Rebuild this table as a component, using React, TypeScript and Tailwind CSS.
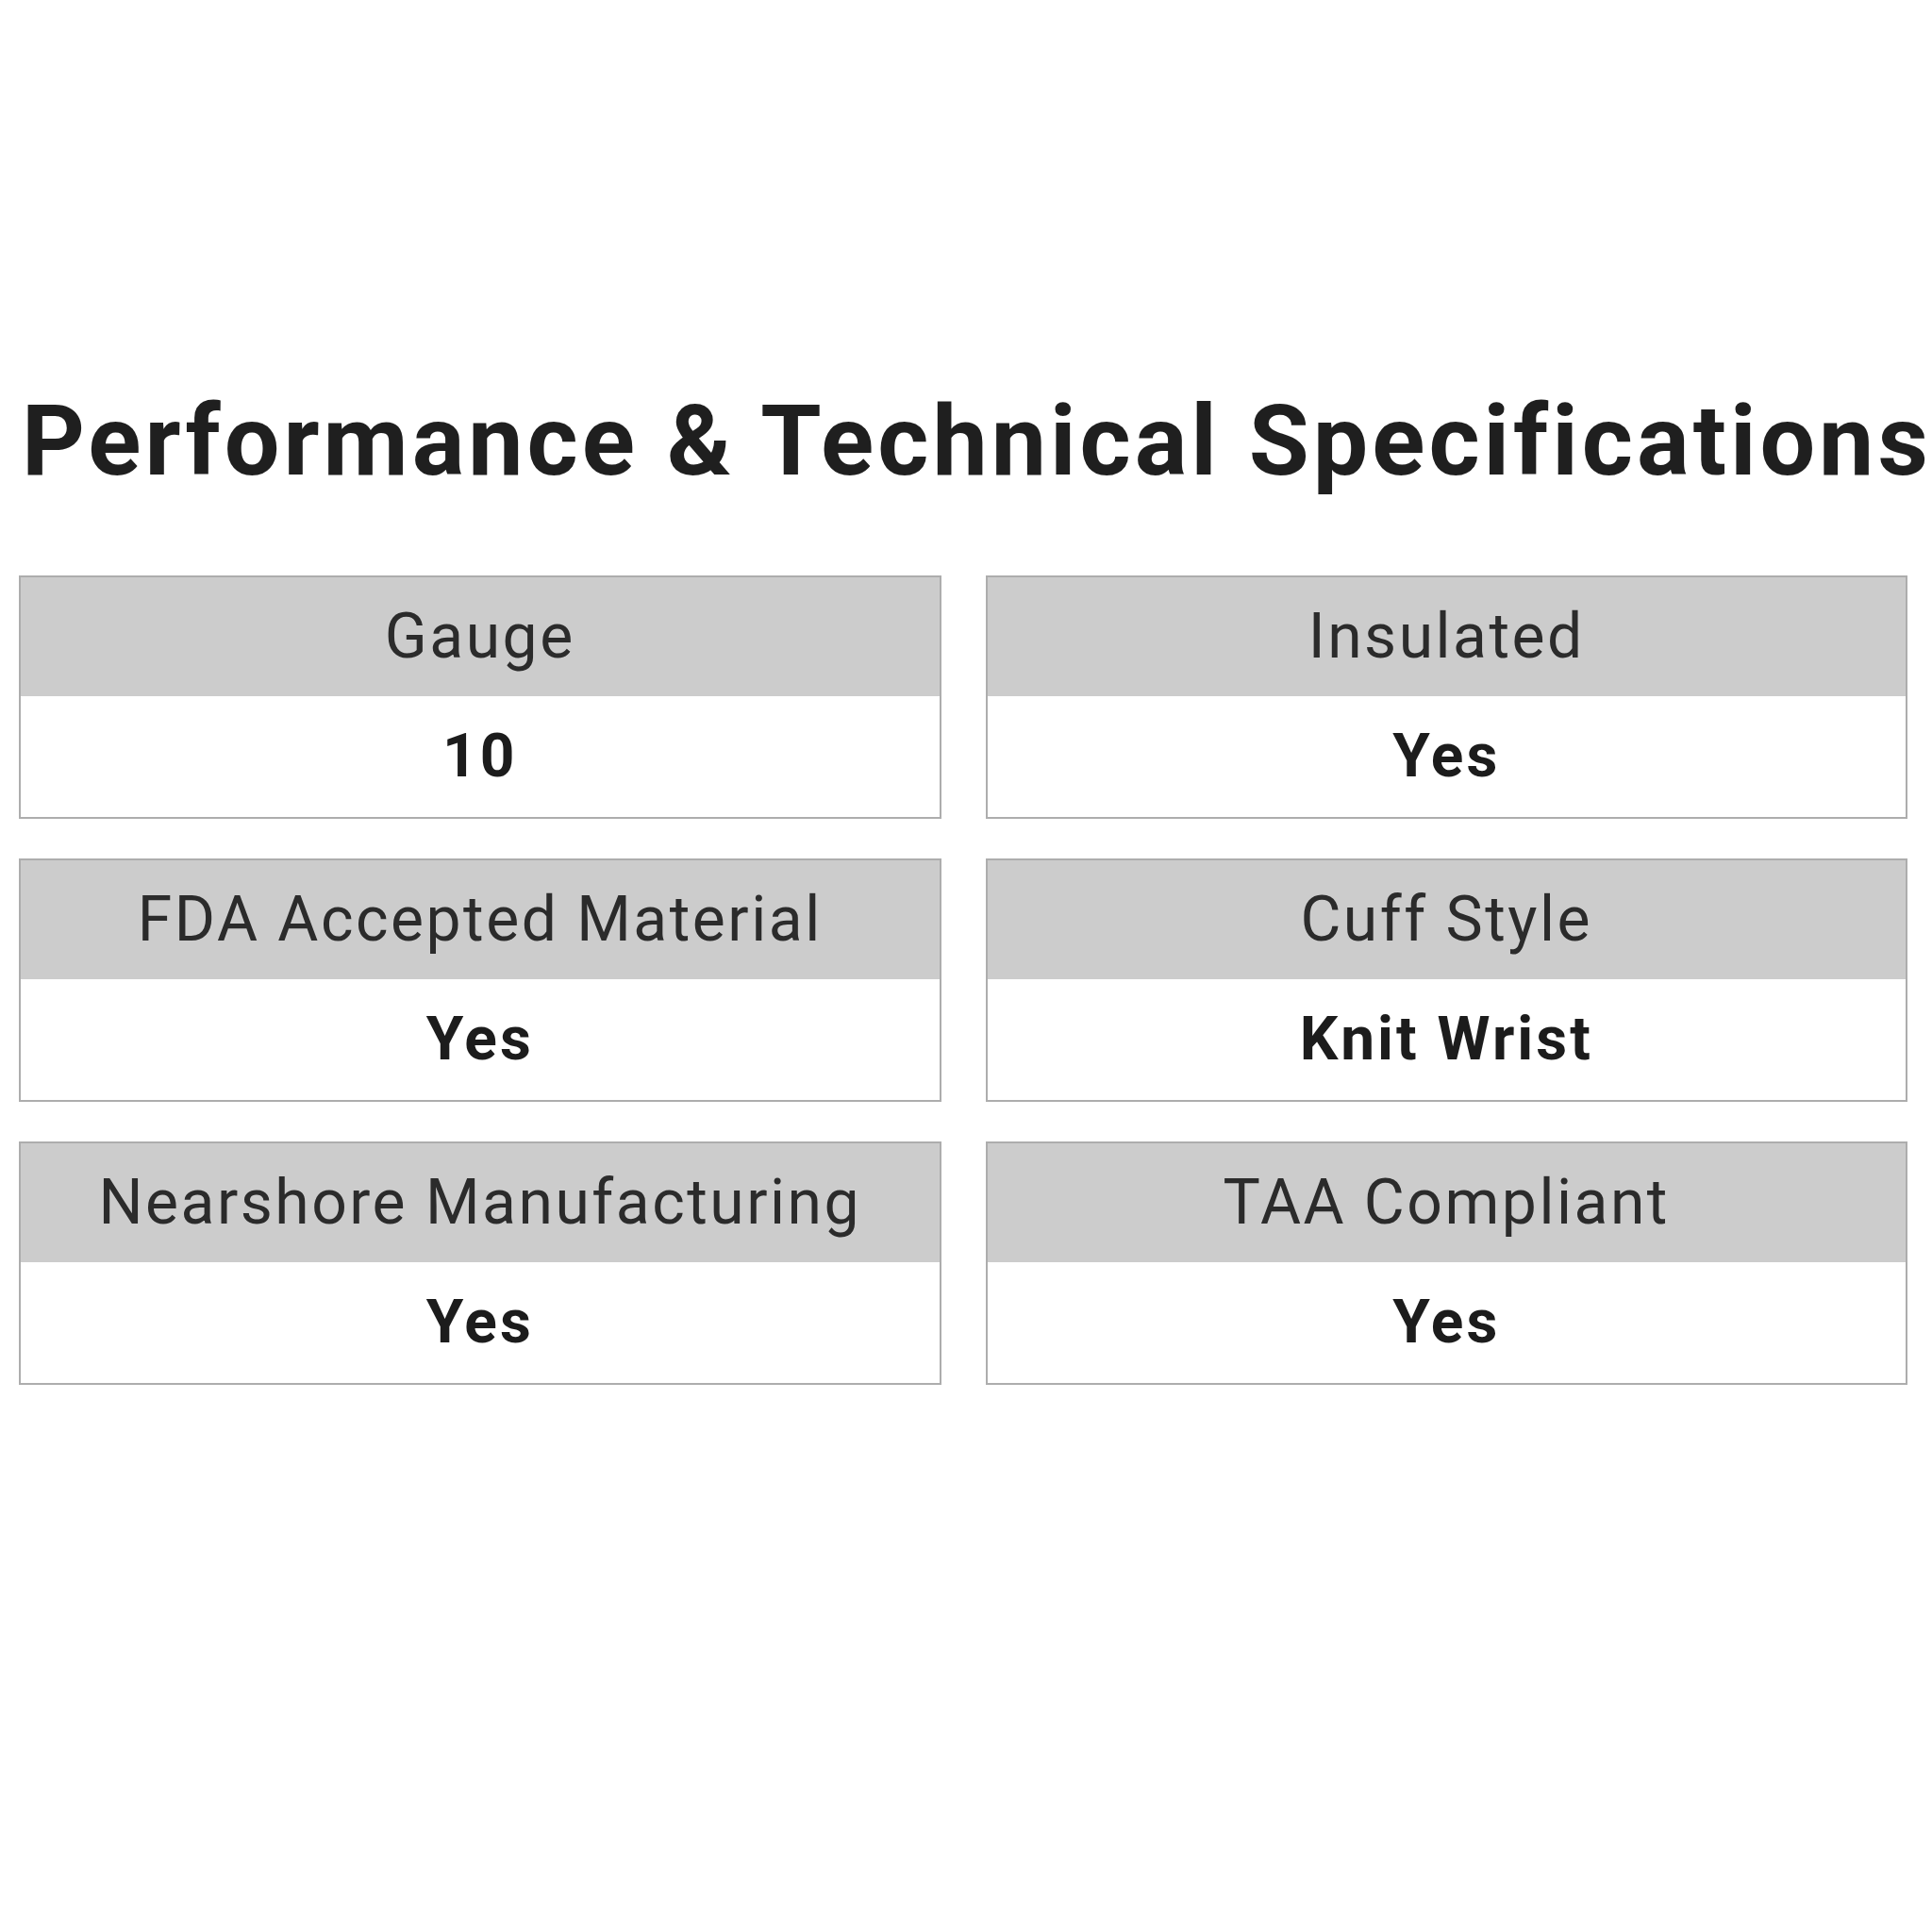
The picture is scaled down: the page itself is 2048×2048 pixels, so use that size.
const specs = [
  { label: "Gauge", value: "10" },
  { label: "Insulated", value: "Yes" },
  { label: "FDA Accepted Material", value: "Yes" },
  { label: "Cuff Style", value: "Knit Wrist" },
  { label: "Nearshore Manufacturing", value: "Yes" },
  { label: "TAA Compliant", value: "Yes" },
];

const SpecCard = ({ label, value }: { label: string; value: string }) => (
  <div className="flex flex-col border-2 border-[#adadad] bg-white">
    <div className="h-[126px] bg-[#cccccc] flex items-center justify-center text-[66px] leading-none tracking-[2.5px] text-[#2b2b2b] font-['Roboto',sans-serif]">
      {label}
    </div>
    <div className="h-[128px] flex items-center justify-center text-[64px] leading-none tracking-[3px] font-bold text-[#1c1c1c] font-['Roboto',sans-serif]">
      {value}
    </div>
  </div>
);

export default function App() {
  return (
    <div className="w-[2048px] h-[2048px] bg-white overflow-hidden">
      <div className="pt-[408px] pl-[23px] pr-[4px]">
        <h1 className="text-[104px] leading-[120px] font-bold text-[#1f1f1f] whitespace-nowrap tracking-[4px] font-['Roboto',sans-serif]">
          Performance &amp; Technical Specifications
        </h1>
      </div>
      <div className="mt-[82px] pl-[20px] pr-[26px] grid grid-cols-2 gap-x-[47px] gap-y-[42px]">
        {specs.map((s) => (
          <SpecCard key={s.label} label={s.label} value={s.value} />
        ))}
      </div>
    </div>
  );
}
